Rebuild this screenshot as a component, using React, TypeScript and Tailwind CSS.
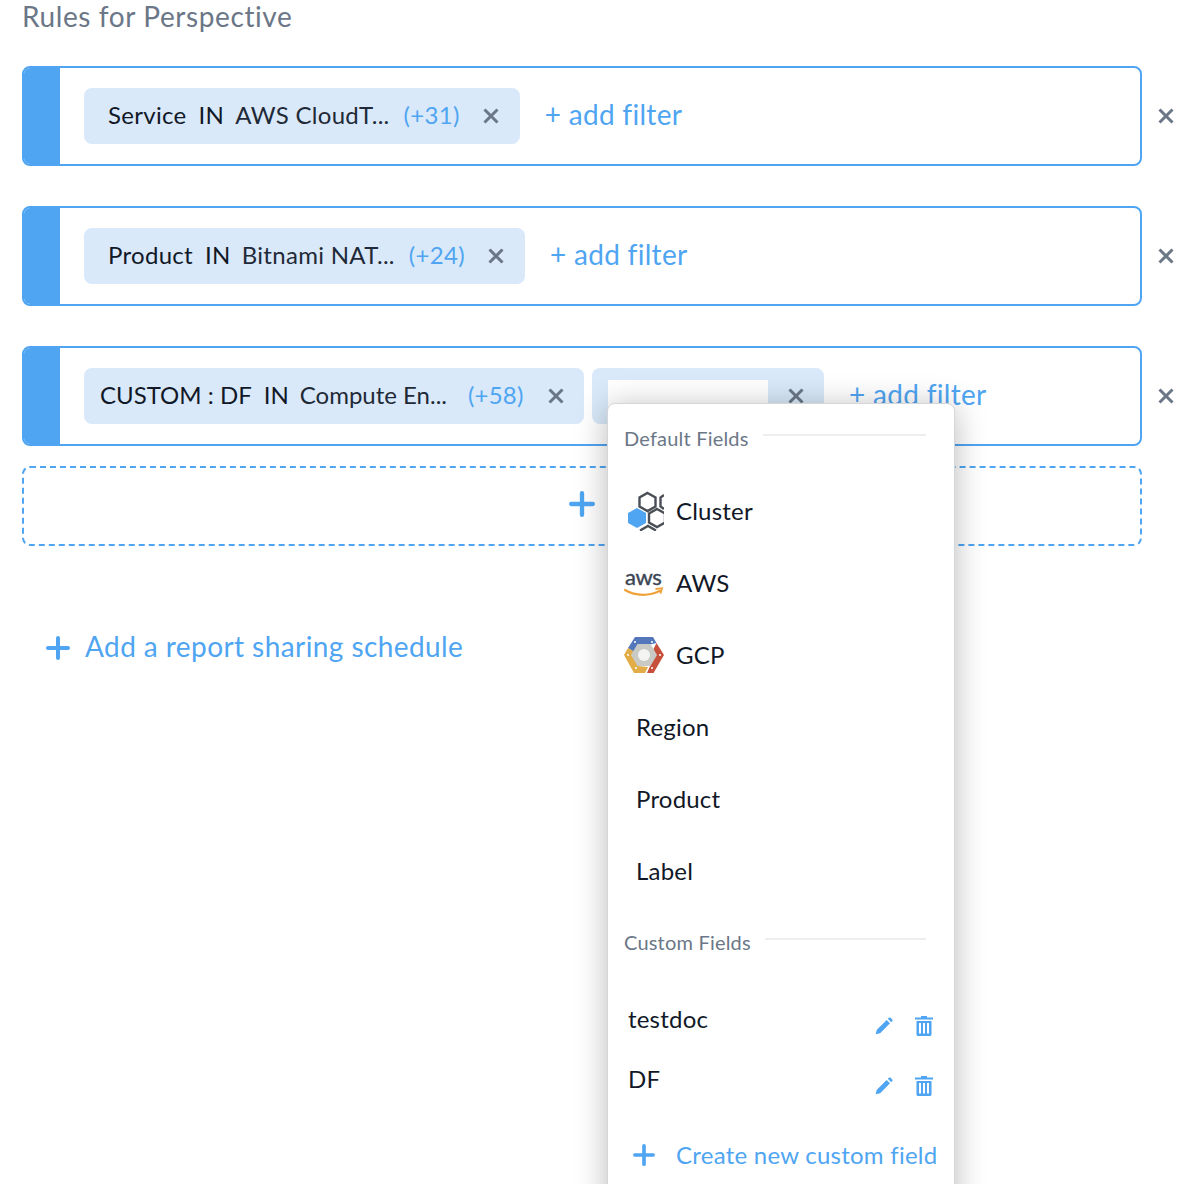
import { Fragment } from "react";

const FONT = "font-['Lato','Noto_Sans',sans-serif]";

function CloseIcon({ className = "" }: { className?: string }) {
  return (
    <svg viewBox="0 0 16 16" className={`w-4 h-4 shrink-0 ${className}`}>
      <path d="M1.5 1.5 14.500 14.500M14.500 1.500 1.500 14.500" stroke="#6b7787" strokeWidth="3" fill="none" />
    </svg>
  );
}

function PlusIcon({ size }: { size: number }) {
  return (
    <svg viewBox="0 0 24 24" width={size} height={size}>
      <path d="M12 2v20M2 12h20" stroke="#4fa5f2" strokeWidth="4" strokeLinecap="round" fill="none" />
    </svg>
  );
}

function EditIcon() {
  return (
    <svg viewBox="0 0 24 24" className="w-5 h-5" fill="#4fa5f2">
      <path d="M2 22l1.400-5.400L15.200 4.800l4 4L7.400 20.600 2 22zM16.600 3.400l1.300-1.300c.6-.6 1.400-.6 2 0l2 2c.6.6.6 1.400 0 2l-1.300 1.300-4-4z" />
    </svg>
  );
}

function TrashIcon() {
  return (
    <svg viewBox="0 0 18 20" className="w-[18px] h-5" fill="#4fa5f2">
      <path d="M6 0h6v1.500h6V3.500H0V1.500h6V0z" />
      <path fillRule="evenodd" d="M1.500 5h15v13.500a1.500 1.500 0 0 1-1.500 1.500H3a1.500 1.500 0 0 1-1.500-1.500V5zM4 7v10.500h2V7H4zm4 0v10.500h2V7H8zm4 0v10.500h2V7h-2z" />
    </svg>
  );
}

function ClusterIcon() {
  return (
    <svg viewBox="0 0 40 40" className="w-10 h-10">
      <g fill="none" stroke="#4a4f57" strokeWidth="2.400">
        <path d="M23.500 2l8 4.500v9l-8 4.500-8-4.500v-9z" />
        <path d="M40 4l-3.500 2.500v9L40 18" />
        <path d="M33 18l8 4.500v9l-8 4.500-8-4.500v-9z" />
        <path d="M16 39.500l8-4.500 8 4.500" />
      </g>
      <path d="M13 17l9 5v10l-9 5-9-5V22z" fill="#4fa5f2" />
    </svg>
  );
}

function AwsIcon() {
  return (
    <svg viewBox="0 0 40 32" className="w-10 h-8 overflow-visible">
      <text x="1" y="18" fontSize="22" fontWeight="400" stroke="#3c4654" strokeWidth="0.400" fill="#3c4654" fontFamily="Lato, sans-serif" textLength="37">aws</text>
      <path d="M1 23c11 6.500 25 6 35 .8" stroke="#f0a23a" strokeWidth="2.200" fill="none" strokeLinecap="round" />
      <path d="M31.500 22l6.500-.8-1.600 5.600" stroke="#f0a23a" strokeWidth="1.800" fill="none" />
    </svg>
  );
}

function GcpIcon() {
  return (
    <svg viewBox="0 0 40 36" className="w-10 h-9">
      <path d="M11 0h18l3.500 6L20 9l-9.500 6L4 11z" fill="#5477bb" />
      <path d="M4 11l6.500 4L14 29l10 1-3 6H10L0 18z" fill="#e2ac47" />
      <path d="M32.500 6L40 18 29.500 36H23l4-9 2-14z" fill="#c6503c" />
      <path d="M13.500 7h13l6.500 11-6.500 11h-13L7 18z" fill="#c9c9c6" />
      <circle cx="20" cy="18" r="6" fill="#f4f4f2" />
      <g fill="#ffffff">
        <circle cx="11" cy="5" r="1" />
        <circle cx="28" cy="5" r="1" />
        <circle cx="36" cy="18" r="1" />
        <circle cx="28" cy="31" r="1" />
        <circle cx="12" cy="31" r="1" />
        <circle cx="4" cy="18" r="1" />
      </g>
    </svg>
  );
}

function FilterChip({ field, value, more, wide }: { field: string; value: string; more: string; wide?: boolean }) {
  if (wide) {
    return (
      <div className="flex items-center h-14 w-[500px] rounded-lg bg-[#d9e9f9] pl-4 text-2xl">
        <span className="text-[#111827] whitespace-pre pb-[2px]">{field}</span>
        <span className="text-[#111827] ml-3 pb-[2px]">IN</span>
        <span className="text-[#1f2937] ml-[11px] whitespace-pre pb-[2px]">{value}</span>
        <span className="text-[#4fa5f2] ml-[21px] pb-[2px] tracking-[0.2px]">{more}</span>
        <CloseIcon className="ml-6" />
      </div>
    );
  }
  return (
    <div className="flex items-center h-14 rounded-lg bg-[#d9e9f9] pl-6 pr-[21px] text-2xl tracking-[0.3px]">
      <span className="text-[#111827] whitespace-pre pb-[2px]">{field}</span>
      <span className="text-[#111827] ml-3 pb-[2px]">IN</span>
      <span className="text-[#1f2937] ml-[11px] whitespace-pre pb-[2px]">{value}</span>
      <span className="text-[#4fa5f2] ml-[14px] pb-[2px]">{more}</span>
      <CloseIcon className="ml-[23px]" />
    </div>
  );
}

function AddFilter() {
  return <span className="text-[#4fa5f2] text-[28px] tracking-[0.3px] ml-[25px] pb-1 whitespace-nowrap">+ add filter</span>;
}

function RuleRow({ children }: { children: React.ReactNode }) {
  return (
    <div className="flex items-center">
      <div className="w-[1120px] h-[100px] flex items-center rounded-lg border-2 border-[#4fa5f2] bg-white overflow-hidden">
        <div className="w-9 h-full bg-[#4fa5f2] shrink-0" />
        <div className="flex items-center pl-6">{children}</div>
      </div>
      <CloseIcon className="ml-4" />
    </div>
  );
}

const defaultFields = [
  { label: "Cluster", icon: <ClusterIcon /> },
  { label: "AWS", icon: <AwsIcon /> },
  { label: "GCP", icon: <GcpIcon /> },
  { label: "Region" },
  { label: "Product" },
  { label: "Label" },
];

function FieldHeading({ label }: { label: string }) {
  return (
    <div className="flex items-start pl-4 pr-7 h-7">
      <span className="text-xl text-[#6b7787] leading-7 tracking-[0.2px] -mt-[2px]">{label}</span>
      <div className="flex-1 h-0.5 bg-[#eeeeee] ml-[14px] mt-2" />
    </div>
  );
}

function FieldMenu() {
  return (
    <div className="absolute left-[607px] top-[403px] w-[348px] h-[900px] bg-white rounded-lg border border-[#d4d6d9] shadow-[0_4px_32px_rgba(0,0,0,0.28)] pt-[22px] text-2xl tracking-[0.2px]">
      <FieldHeading label="Default Fields" />
      <div className="mt-[21px]">
        {defaultFields.map((f) => (
          <div key={f.label} className="h-[72px] flex items-center">
            {f.icon ? (
              <Fragment>
                <div className="w-10 h-10 ml-4 flex items-center justify-center shrink-0">{f.icon}</div>
                <span className="text-[#111827] ml-3">{f.label}</span>
              </Fragment>
            ) : (
              <span className="text-[#111827] ml-7">{f.label}</span>
            )}
          </div>
        ))}
      </div>
      <div className="mt-[23px]">
        <FieldHeading label="Custom Fields" />
      </div>
      <div className="mt-[45px] pl-5 pr-[21px]">
        <CustomField label="testdoc" />
        <div className="h-[22px]" />
        <CustomField label="DF" />
      </div>
      <div className="flex items-center mt-[38px] pl-[25px]">
        <PlusIcon size={22} />
        <span className="text-[#4fa5f2] ml-[21px] tracking-[0.25px] whitespace-nowrap">Create new custom field</span>
      </div>
    </div>
  );
}

function CustomField({ label }: { label: string }) {
  return (
    <div className="flex items-start h-[38px]">
      <span className="text-[#111827] leading-8 flex-1">{label}</span>
      <div className="flex items-center gap-[21px] mt-[13px]">
        <EditIcon />
        <TrashIcon />
      </div>
    </div>
  );
}

export default function App() {
  return (
    <div className={`${FONT} relative h-[1184px] overflow-hidden bg-white pl-[22px]`}>
      <h1 className="text-[28px] leading-[32px] tracking-[0.6px] text-[#6b7787]">Rules for Perspective</h1>
      <div className="mt-[34px] flex flex-col gap-10">
        <RuleRow>
          <FilterChip field="Service" value="AWS CloudT..." more="(+31)" />
          <AddFilter />
        </RuleRow>
        <RuleRow>
          <FilterChip field="Product" value="Bitnami NAT..." more="(+24)" />
          <AddFilter />
        </RuleRow>
        <RuleRow>
          <FilterChip field="CUSTOM : DF" value="Compute En..." more="(+58)" wide />
          <div className="flex items-center h-14 w-[232px] rounded-lg bg-[#d9e9f9] ml-2 pl-4">
            <div className="w-40 h-11 self-end bg-white" />
            <CloseIcon className="ml-5" />
          </div>
          <AddFilter />
        </RuleRow>
      </div>
      <div className="mt-5 w-[1120px] h-20 rounded-lg border-2 border-dashed border-[#4fa5f2] flex items-center justify-center">
        <div className="pb-1"><PlusIcon size={26} /></div>
      </div>
      <div className="mt-[79px] ml-6 flex items-center">
        <PlusIcon size={24} />
        <span className="text-[28px] text-[#4fa5f2] tracking-[0.42px] ml-[15px] pb-1">Add a report sharing schedule</span>
      </div>
      <FieldMenu />
    </div>
  );
}
